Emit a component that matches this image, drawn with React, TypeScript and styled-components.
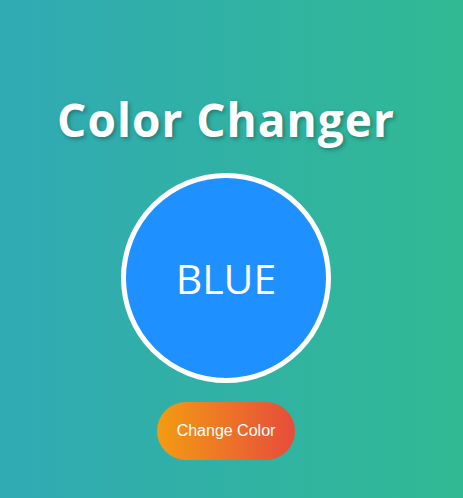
import React, { useState } from "react";
import styled, { createGlobalStyle } from "styled-components";

const GlobalStyle = createGlobalStyle`
  html, body { margin: 0; padding: 0; }
  body {
    min-height: 498px;
    background: linear-gradient(to right, #30aab4, #31b994);
    font-family: "Open Sans", "Segoe UI", sans-serif;
  }
`;

const Page = styled.main`
  display: flex;
  flex-direction: column;
  align-items: center;
  padding: 89px 11px 0 0;
  min-height: 409px;
`;

const Title = styled.h1`
  margin: 0 0 23px;
  font-family: "Open Sans", sans-serif;
  font-weight: 700;
  font-size: 46px;
  letter-spacing: 1px;
  line-height: 61px;
  color: #ffffff;
  text-shadow: 2px 2px 4px rgba(0, 0, 0, 0.3);
`;

const Circle = styled.div<{ $color: string }>`
  width: 200px;
  height: 200px;
  border-radius: 50%;
  border: 5px solid #ffffff;
  background: ${(p) => p.$color};
  display: flex;
  align-items: center;
  justify-content: center;
  color: #ffffff;
  font-family: "Open Sans", sans-serif;
  font-size: 41px;
  font-weight: 400;
  margin-bottom: 19px;
`;

const Button = styled.button`
  border: none;
  border-radius: 30px;
  padding: 20px 20px;
  background: linear-gradient(to right, #f39c12, #e74c3c);
  color: #ffffff;
  font-family: "Liberation Sans", Arial, sans-serif;
  font-size: 16px;
  line-height: 18px;
  cursor: pointer;
`;

const COLORS = [
  { name: "BLUE", value: "#1e90ff" },
  { name: "RED", value: "#e74c3c" },
  { name: "GREEN", value: "#2ecc71" },
  { name: "PURPLE", value: "#9b59b6" },
];

export default function App() {
  const [idx, setIdx] = useState(0);
  const c = COLORS[idx];
  return (
    <>
      <GlobalStyle />
      <Page>
        <Title>Color Changer</Title>
        <Circle $color={c.value}>{c.name}</Circle>
        <Button onClick={() => setIdx((idx + 1) % COLORS.length)}>Change Color</Button>
      </Page>
    </>
  );
}
